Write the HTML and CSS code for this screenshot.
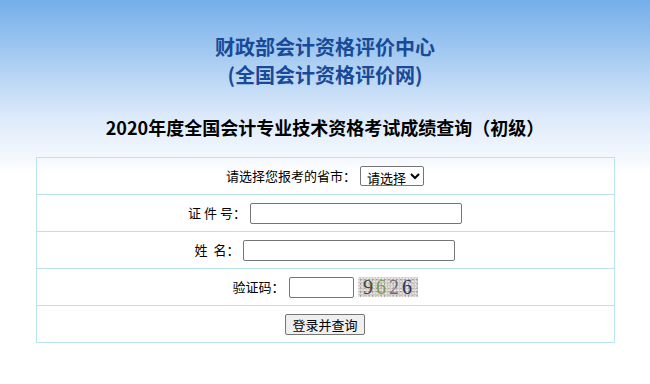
FILE: index.html
```html
<!DOCTYPE html>
<html lang="zh-CN">
<head>
<meta charset="utf-8">
<title>成绩查询</title>
<link rel="stylesheet" href="styles.css">
</head>
<body>
<div class="page">
  <div class="org">
    <div>财政部会计资格评价中心</div>
    <div>(全国会计资格评价网)</div>
  </div>
  <h1 class="heading">2020年度全国会计专业技术资格考试成绩查询（初级）</h1>
  <div class="form">
    <div class="row">
      <span class="label">请选择您报考的省市：</span>
      <select class="sel"><option>请选择</option></select>
    </div>
    <div class="row">
      <span class="label">证 件 号：</span>
      <input class="txt wide" type="text">
    </div>
    <div class="row">
      <span class="label">姓&nbsp;&nbsp;名：</span>
      <input class="txt wide" type="text">
    </div>
    <div class="row">
      <span class="label">验证码：</span>
      <input class="txt short" type="text">
      <span class="captcha"><span class="d1">9</span><span class="d2">6</span><span class="d3">2</span><span class="d4">6</span></span>
    </div>
    <div class="row">
      <button class="btn" type="button">登录并查询</button>
    </div>
  </div>
</div>
</body>
</html>
```

FILE: styles.css
```css
html, body {
  margin: 0;
  padding: 0;
}
body {
  background: #fff linear-gradient(to bottom, #74aeea 0px, #a9cdf2 60px, #dbe9fa 115px, #f5f9fe 160px, #ffffff 175px) no-repeat;
  background-size: 100% 175px;
  font-family: "Noto Sans CJK SC", "Microsoft YaHei", sans-serif;
  color: #000;
  height: 384px;
}
.page {
  padding-top: 33px;
}
.org {
  text-align: center;
  color: #184a98;
  font-size: 20px;
  font-weight: bold;
  line-height: 28px;
}
.heading {
  margin: 26px 0 18px;
  text-align: center;
  font-size: 18px;
  font-weight: bold;
  line-height: 24px;
}
.form {
  width: 577px;
  margin: 0 auto;
  border: 1px solid #b9e3ee;
  border-bottom: none;
}
.row {
  height: 36px;
  border-bottom: 1px solid #b9e3ee;
  display: flex;
  align-items: center;
  justify-content: center;
  font-size: 13px;
  gap: 4px;
}
.label {
  line-height: 20px;
}
.sel {
  height: 20px;
  font-family: inherit;
  font-size: 13px;
  padding: 0 0 0 2px;
  border: 1px solid #767676;
  border-radius: 2px;
  background: #fff;
  color: #000;
}
.txt {
  box-sizing: border-box;
  height: 21px;
  border: 1px solid #767676;
  border-radius: 2px;
  padding: 1px 2px;
  font-size: 13px;
  background: #fff;
}
.wide {
  width: 212px;
}
.short {
  width: 65px;
}
.captcha {
  display: inline-flex;
  align-items: center;
  justify-content: center;
  gap: 3px;
  width: 60px;
  height: 20px;
  background-color: #cfc9c6;
  background-image:
    radial-gradient(circle at 30% 40%, rgba(255,255,255,0.6) 0.6px, transparent 1.2px),
    radial-gradient(circle at 70% 70%, rgba(120,110,110,0.5) 0.6px, transparent 1.2px);
  background-size: 3px 3px, 4px 4px;
  font-family: "Liberation Serif", serif;
  font-size: 20px;
  line-height: 20px;
}
.d1 { color: #3c4a3c; }
.d2 { color: #7a9a52; }
.d3 { color: #6c6c72; }
.d4 { color: #2c2f5c; }
.btn {
  height: 21px;
  padding: 0 6px;
  font-family: inherit;
  font-size: 13px;
  line-height: 17px;
  background: #efefef;
  border: 1px solid #767676;
  border-radius: 2px;
  color: #000;
}
```
